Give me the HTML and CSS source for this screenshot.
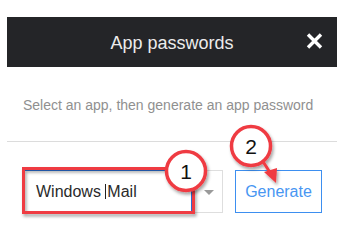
FILE: index.html
```html
<!DOCTYPE html>
<html>
<head>
<meta charset="utf-8">
<link rel="stylesheet" href="styles.css">
</head>
<body>
<div class="dialog">
  <div class="header">
    <span></span>
    <h1 class="title">App passwords</h1>
    <svg class="close" width="17" height="16" viewBox="0 0 17 16"><path d="M2 1.5 L15 14.5 M15 1.5 L2 14.5" stroke="#fff" stroke-width="3.4" fill="none"/></svg>
  </div>
  <p class="subtitle">Select an app, then generate an app password</p>
  <hr class="divider">
  <div class="row">
    <div class="select">
      <div class="select-input">Windows <span class="caret"></span>Mail</div>
      <span class="arrow"></span>
    </div>
    <button class="generate">Generate</button>
  </div>
</div>
<svg class="annot" width="337" height="232" viewBox="0 0 337 232">
  <defs>
    <filter id="sh" x="-30%" y="-30%" width="160%" height="160%">
      <feDropShadow dx="1.5" dy="2.5" stdDeviation="1.5" flood-color="#000" flood-opacity="0.35"/>
    </filter>
  </defs>
  <rect x="23.5" y="168.5" width="170" height="44" fill="none" stroke="#ef3b43" stroke-width="3" filter="url(#sh)"/>
  <g filter="url(#sh)">
    <line x1="262" y1="160" x2="271" y2="174" stroke="#ef3b43" stroke-width="3"/>
    <polygon points="264,172 277,168 276,183" fill="#ef3b43"/>
    <circle cx="251" cy="146" r="19.5" fill="#fff" stroke="#ef3b43" stroke-width="3.5"/>
    <circle cx="186" cy="171" r="19.5" fill="#fff" stroke="#ef3b43" stroke-width="3.5"/>
  </g>
  <text x="251" y="153.5" class="num">2</text>
  <text x="186" y="178.5" class="num">1</text>
</svg>
</body>
</html>
```

FILE: styles.css
```css
html, body {
  margin: 0;
  padding: 0;
  overflow: hidden;
  background: #fff;
  font-family: "Liberation Sans", Arial, sans-serif;
}
body {
  width: 337px;
  height: 232px;
  position: relative;
}
.dialog {
  margin: 17px 0 0 7px;
  width: 330px;
}
.header {
  height: 50px;
  background: #242528;
  display: grid;
  grid-template-columns: 1fr auto 1fr;
  align-items: center;
}
.title {
  margin: 0;
  font-size: 18px;
  font-weight: normal;
  color: #ececec;
  line-height: 20px;
  padding-top: 2px;
}
.close {
  justify-self: end;
  margin-right: 14px;
  margin-top: -2px;
}
.subtitle {
  margin: 30px 0 0 16px;
  font-size: 14px;
  line-height: 16px;
  color: #909090;
  white-space: nowrap;
}
.divider {
  margin: 28px 0 0 0;
  border: 0;
  border-top: 1px solid #dcdcdc;
  height: 0;
}
.row {
  display: flex;
  gap: 12px;
  margin: 28px 0 0 16px;
}
.select {
  width: 200px;
  height: 43px;
  box-sizing: border-box;
  border: 1px solid #dedede;
  display: flex;
  align-items: center;
}
.select-input {
  width: 169px;
  height: 43px;
  box-sizing: border-box;
  margin: -1px 0 -1px -1px;
  border: 1px solid #2a6fd6;
  display: flex;
  align-items: center;
  padding-left: 12px;
  font-size: 16px;
  color: #2a2a2a;
  white-space: pre;
}
.caret {
  display: inline-block;
  width: 1px;
  height: 15px;
  background: #222;
  margin-right: 1px;
}
.arrow {
  margin-left: 12px;
  width: 0;
  height: 0;
  border-left: 5px solid transparent;
  border-right: 5px solid transparent;
  border-top: 5px solid #9a9a9a;
  margin-top: 1px;
}
.generate {
  width: 87px;
  height: 43px;
  box-sizing: border-box;
  background: #fff;
  border: 1px solid #3d8ff0;
  color: #4896f2;
  font-family: "Liberation Sans", Arial, sans-serif;
  font-size: 16px;
  padding: 0;
}
.annot {
  position: absolute;
  left: 0;
  top: 0;
  pointer-events: none;
}
.num {
  font-family: "Liberation Sans", Arial, sans-serif;
  font-size: 21px;
  text-anchor: middle;
  fill: #111;
}
```
